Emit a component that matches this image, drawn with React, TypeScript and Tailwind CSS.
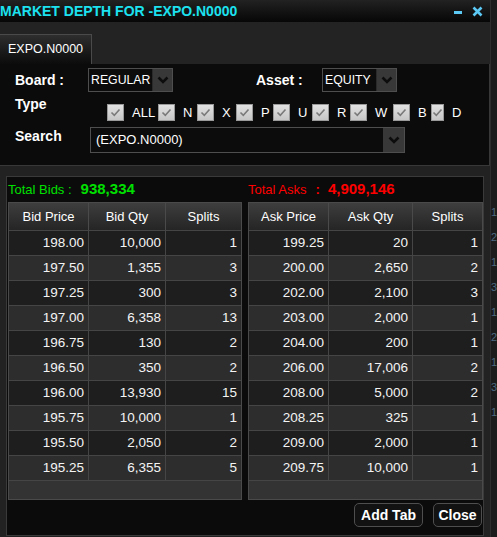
import React from 'react';

const bids = [
  ['198.00', '10,000', '1'],
  ['197.50', '1,355', '3'],
  ['197.25', '300', '3'],
  ['197.00', '6,358', '13'],
  ['196.75', '130', '2'],
  ['196.50', '350', '2'],
  ['196.00', '13,930', '15'],
  ['195.75', '10,000', '1'],
  ['195.50', '2,050', '2'],
  ['195.25', '6,355', '5'],
];

const asks = [
  ['199.25', '20', '1'],
  ['200.00', '2,650', '2'],
  ['202.00', '2,100', '3'],
  ['203.00', '2,000', '1'],
  ['204.00', '200', '1'],
  ['206.00', '17,006', '2'],
  ['208.00', '5,000', '2'],
  ['208.25', '325', '1'],
  ['209.00', '2,000', '1'],
  ['209.75', '10,000', '1'],
];

const types = [
  { label: 'ALL', w: 'w-[51px]' },
  { label: 'N', w: 'w-[39px]' },
  { label: 'X', w: 'w-[39px]' },
  { label: 'P', w: 'w-[37px]' },
  { label: 'U', w: 'w-[39px]' },
  { label: 'R', w: 'w-[38px]' },
  { label: 'W', w: 'w-[43px]' },
  { label: 'B', w: 'w-[38px]' },
  { label: 'D', w: 'w-[30px]' },
];

function Chevron() {
  return (
    <svg width="14" height="14" viewBox="0 0 14 14">
      <polyline points="2.5,4.5 7,9 11.5,4.5" fill="none" stroke="#0d0d0d" strokeWidth="2.6" />
    </svg>
  );
}

function Select({ value, width, height }: { value: string; width: string; height: string }) {
  return (
    <div className={`flex ${width} ${height} border border-[#4e4e4e] bg-[#0c0c0c]`}>
      <div className="flex-1 flex items-center pl-[2px] text-[12.3px] text-white overflow-hidden whitespace-nowrap">
        {value}
      </div>
      <div className="w-[20px] flex items-center justify-center bg-[#383838] border-l border-[#2a2a2a]">
        <Chevron />
      </div>
    </div>
  );
}

function Checkbox() {
  return (
    <div className="w-[17px] h-[17px] border border-[#9a9a9a] bg-gradient-to-b from-[#e2e2e2] to-[#c6c6c6] flex items-center justify-center">
      <svg width="11" height="11" viewBox="0 0 11 11">
        <polyline points="1.5,5.5 4.3,8.3 9.5,2.5" fill="none" stroke="#7a7a7a" strokeWidth="1.6" />
      </svg>
    </div>
  );
}

function DepthTable({ headers, rows, cols }: { headers: string[]; rows: string[][]; cols: string }) {
  return (
    <div className="border border-[#4a4a4a] bg-[#333]">
      <div className={`grid ${cols} h-[27px] bg-gradient-to-b from-[#3e3e3e] to-[#252525]`}>
        {headers.map((h, i) => (
          <div
            key={h}
            className={`flex items-center justify-center text-[13px] text-white ${i > 0 ? 'border-l border-[#4a4a4a]' : ''}`}
          >
            {h}
          </div>
        ))}
      </div>
      {rows.map((r, ri) => (
        <div
          key={ri}
          className={`grid ${cols} h-[25px] border-t border-[#454545] ${ri % 2 === 0 ? 'bg-[#1e1e1e]' : 'bg-[#2d2d2d]'}`}
        >
          {r.map((c, ci) => (
            <div
              key={ci}
              className={`flex items-center justify-end pr-[4px] text-[13.5px] text-[#f4f4f4] ${ci > 0 ? 'border-l border-[#454545]' : ''}`}
            >
              {c}
            </div>
          ))}
        </div>
      ))}
      <div className="h-[19px] border-t border-[#454545] bg-[#333]" />
    </div>
  );
}

export default function App() {
  return (
    <div
      className="w-[497px] h-[537px] flex overflow-hidden bg-[#1a1a1a]"
      style={{ fontFamily: '"Liberation Sans", Arial, sans-serif' }}
    >
      <div className="w-[490px] flex flex-col bg-[#222]">
        {/* Title bar */}
        <div className="h-[22px] flex items-center bg-gradient-to-b from-[#222] to-[#070707]">
          <div className="flex-1 text-[14px] font-bold text-[#1ce2f0] whitespace-nowrap leading-none">
            MARKET DEPTH FOR -EXPO.N0000
          </div>
          <div className="w-[8px] h-[3px] bg-[#5cc8f4] mt-[2px]" />
          <svg width="11" height="11" viewBox="0 0 11 11" className="ml-[10px] mr-[7px]">
            <path d="M1.5 1.5 L9.5 9.5 M9.5 1.5 L1.5 9.5" stroke="#5cc8f4" strokeWidth="2.6" />
          </svg>
        </div>

        {/* Tabs */}
        <div className="h-[42px] flex items-end bg-[#232323]">
          <div className="h-[30px] w-[92px] flex items-center pl-[8px] border-t border-r border-[#4a4a4a] bg-gradient-to-b from-[#2e2e2e] to-[#0c0c0c] text-[12.5px] text-white">
            EXPO.N0000
          </div>
        </div>

        {/* Filters */}
        <div className="w-[490px] h-[102px] pt-[4px] bg-[#0b0b0b] border-r border-b border-[#383838] flex flex-col">
          <div className="flex items-center h-[24px] pl-[15px]">
            <div className="w-[73px] text-[14px] font-bold text-white">Board :</div>
            <Select value="REGULAR" width="w-[85px]" height="h-[24px]" />
            <div className="ml-[83px] w-[66px] text-[14px] font-bold text-white">Asset :</div>
            <Select value="EQUITY" width="w-[75px]" height="h-[24px]" />
          </div>
          <div className="flex h-[35px] pl-[15px]">
            <div className="w-[92px] mt-[4px] text-[14px] font-bold text-white leading-[16px]">Type</div>
            <div className="flex mt-[12px] h-[17px]">
              {types.map((t) => (
                <div key={t.label} className={`flex items-center ${t.w}`}>
                  <Checkbox />
                  <span className="ml-[8px] text-[13px] text-white">{t.label}</span>
                </div>
              ))}
            </div>
          </div>
          <div className="flex h-[26px] pl-[15px]">
            <div className="w-[75px] mt-[1px] text-[14px] font-bold text-white leading-[16px]">Search</div>
            <div className="flex w-[315px] h-[26px] border border-[#4e4e4e] bg-[#0c0c0c]">
              <div className="flex-1 flex items-center pl-[5px] text-[13px] text-white">(EXPO.N0000)</div>
              <div className="w-[21px] flex items-center justify-center bg-[#383838]">
                <Chevron />
              </div>
            </div>
          </div>
        </div>

        {/* Depth */}
        <div className="mt-[10px] ml-[6px] w-[478px] h-[360px] border border-[#3a3a3a] bg-[#0b0b0b] pl-[1px] flex flex-col">
          <div className="flex h-[25px] items-center">
            <div className="w-[240px] flex items-center text-[#00e000] whitespace-nowrap">
              <span className="text-[13px]">Total Bids :</span>
              <span className="ml-[9px] text-[15px] font-bold">938,334</span>
            </div>
            <div className="flex items-center text-[#ff0000] whitespace-nowrap">
              <span className="text-[13px]">Total Asks</span>
              <span className="ml-[9px] text-[13px] font-bold">:</span>
              <span className="ml-[8px] text-[15px] font-bold">4,909,146</span>
            </div>
          </div>
          <div className="flex gap-[6px]">
            <div className="w-[234px]">
              <DepthTable headers={['Bid Price', 'Bid Qty', 'Splits']} rows={bids} cols="grid-cols-[79px_77px_76px]" />
            </div>
            <div className="w-[235px]">
              <DepthTable headers={['Ask Price', 'Ask Qty', 'Splits']} rows={asks} cols="grid-cols-[79px_84px_70px]" />
            </div>
          </div>
          <div className="flex justify-end gap-[10px] mt-[3px] pr-[1px]">
            <div className="w-[69px] h-[24px] flex items-center justify-center rounded-[5px] border border-[#4e4e4e] bg-[#121212] text-[14px] font-bold text-white">
              Add Tab
            </div>
            <div className="w-[49px] h-[24px] flex items-center justify-center rounded-[5px] border border-[#4e4e4e] bg-[#121212] text-[14px] font-bold text-white">
              Close
            </div>
          </div>
        </div>
      </div>
      <div className="flex-1 bg-[#1c1c1c] border-l border-[#2e2e2e] overflow-hidden text-[11px] leading-[25px] text-[#4f6a80] pt-[200px]">
        1<br />2<br />1<br />3<br />1<br />2<br />1<br />3<br />1
      </div>
    </div>
  );
}
